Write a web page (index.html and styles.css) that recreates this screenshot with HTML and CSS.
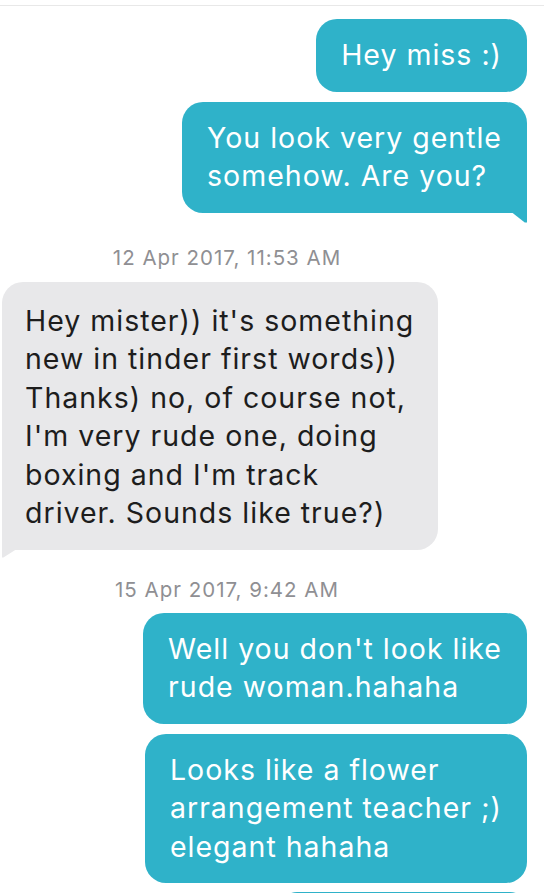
FILE: index.html
```html
<!DOCTYPE html>
<html lang="en">
<head>
<meta charset="utf-8">
<title>Chat</title>
<link rel="stylesheet" href="styles.css">
</head>
<body>
<div class="chat">
  <div class="topline"></div>
  <div class="msg out first">Hey miss :)</div>
  <div class="msg out tail-right">You look very gentle<br>somehow. Are you?</div>
  <div class="stamp stamp-1">12 Apr 2017, 11:53 AM</div>
  <div class="msg in tail-left">Hey mister)) it's something<br>new in tinder first words))<br>Thanks) no, of course not,<br>I'm very rude one, doing<br>boxing and I'm track<br>driver. Sounds like true?)</div>
  <div class="stamp stamp-2">15 Apr 2017, 9:42 AM</div>
  <div class="msg out">Well you don't look like<br>rude woman.hahaha</div>
  <div class="msg out">Looks like a flower<br>arrangement teacher ;)<br>elegant hahaha</div>
  <div class="msg out peek"></div>
</div>
</body>
</html>
```
FILE: styles.css
```css
html, body {
  margin: 0;
  padding: 0;
  background: #ffffff;
  overflow: hidden;
}
.chat {
  width: 544px;
  height: 893px;
  display: flex;
  flex-direction: column;
  font-family: "Inter", "Roboto", sans-serif;
}
.topline {
  margin-top: 5px;
  height: 0;
  border-top: 1px solid #e8e8e8;
}
.msg {
  position: relative;
  font-size: 28.5px;
  line-height: 38.5px;
  padding: 17px 25px 17px 25px;
  border-radius: 21px;
  white-space: nowrap;
  letter-spacing: 1px;
}
.msg.out {
  align-self: flex-end;
  margin-right: 17px;
  margin-top: 10px;
  background: #2fb2c9;
  color: #ffffff;
}
.msg.out.first {
  margin-top: 13px;
}
.msg.in {
  align-self: flex-start;
  margin-left: 2px;
  background: #e8e8ea;
  color: #1d1d1d;
  padding: 20px 24px 17px 23px;
}
.tail-right {
  border-bottom-right-radius: 0;
}
.tail-right::after {
  content: "";
  position: absolute;
  right: 0;
  bottom: -10px;
  width: 15px;
  height: 10px;
  background: #2fb2c9;
  clip-path: polygon(0 0, 100% 0, 100% 100%, 85% 100%);
}
.tail-left {
  border-bottom-left-radius: 0;
}
.tail-left::after {
  content: "";
  position: absolute;
  left: 0;
  bottom: -8px;
  width: 14px;
  height: 8px;
  background: #e8e8ea;
  clip-path: polygon(0 0, 100% 0, 10% 100%, 0 100%);
}
.stamp {
  align-self: stretch;
  padding-right: 90px;
  text-align: center;
  font-size: 20.5px;
  line-height: 24px;
  letter-spacing: 1px;
  color: #8f8f93;
}
.stamp-1 {
  margin-top: 33px;
  margin-bottom: 12px;
}
.stamp-2 {
  margin-top: 28px;
  margin-bottom: 1px;
}
.msg.peek {
  width: 197px;
  height: 38.5px;
  margin-top: 9px;
}
```
